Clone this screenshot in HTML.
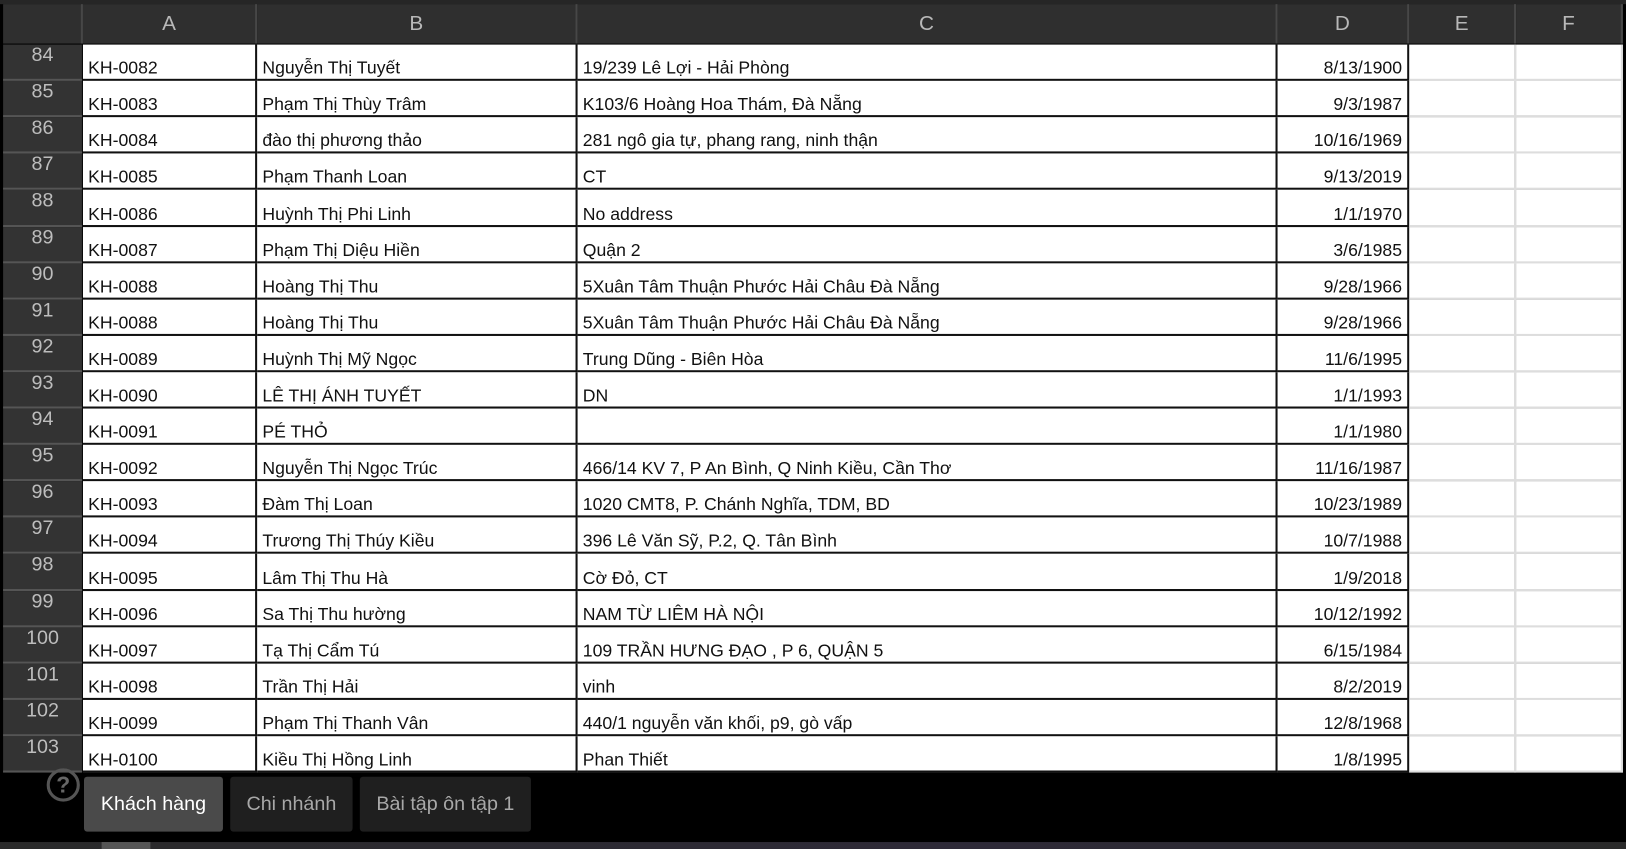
<!DOCTYPE html>
<html><head><meta charset="utf-8"><style>
html,body{margin:0;padding:0;background:#000;width:1626px;height:849px;overflow:hidden}
#w{position:absolute;left:0;top:0;width:1568px;height:819px;transform:scale(1.03699);transform-origin:0 0;background:#000;font-family:"Liberation Sans",sans-serif}
.hd{position:absolute;top:4px;height:38px;background:#2f2f2f;border-right:2px solid #474747;color:#b8b8b8;font-size:20px;text-align:center;line-height:38px;box-sizing:border-box}
.rh{position:absolute;left:3px;width:76px;background:#333;color:#bdbdbd;font-size:19px;text-align:center;border-bottom:2px solid #555;box-sizing:border-box;line-height:22px}
.c{position:absolute;background:#fff;box-sizing:border-box;font-size:17px;color:#111;white-space:nowrap;overflow:hidden;padding:0 5px;display:flex;align-items:flex-end;padding-bottom:0px}
.r{justify-content:flex-end;padding-right:5px}
.tab{position:absolute;top:749px;height:53px;border-radius:3px;font-size:19px;line-height:53px;text-align:center}
</style></head><body><div id="w">
<div style="position:absolute;left:0;top:0;width:1568px;height:4px;background:#262626"></div>
<div class="hd" style="left:3px;width:77px"></div>
<div class="hd" style="left:80px;width:168px">A</div>
<div class="hd" style="left:248px;width:309px">B</div>
<div class="hd" style="left:557px;width:675px">C</div>
<div class="hd" style="left:1232px;width:127px">D</div>
<div class="hd" style="left:1359px;width:103px">E</div>
<div class="hd" style="left:1462px;width:103px">F</div>
<div id="rows"></div>
<div style="position:absolute;left:45px;top:741px;width:26px;height:26px;border:3px solid #555;border-radius:50%;color:#666;font-size:22px;line-height:26px;text-align:center;font-weight:bold">?</div>
<div class="tab" style="left:81px;width:134px;background:#4a4a4a;color:#fff">Khách hàng</div>
<div class="tab" style="left:222px;width:118px;background:#1f1f1f;color:#a8a8a8">Chi nhánh</div>
<div class="tab" style="left:347px;width:165px;background:#1f1f1f;color:#a8a8a8">Bài tập ôn tập 1</div>
<div style="position:absolute;left:0;top:812px;width:1568px;height:7px;background:linear-gradient(90deg,#2a2a2a,#2e2a38 60%,#2a2a2a)"></div>
<div style="position:absolute;left:98px;top:812px;width:47px;height:7px;background:#555"></div>
</div>
<script>
var d=[["KH-0082","Nguyễn Thị  Tuyết","19/239 Lê Lợi - Hải Phòng","8/13/1900"],
["KH-0083","Phạm Thị Thùy Trâm","K103/6 Hoàng Hoa Thám, Đà Nẵng","9/3/1987"],
["KH-0084","đào thị phương thảo","281 ngô gia tự, phang rang, ninh thận","10/16/1969"],
["KH-0085","Phạm Thanh Loan","CT","9/13/2019"],
["KH-0086","Huỳnh Thị Phi Linh","No address","1/1/1970"],
["KH-0087","Phạm Thị Diệu Hiền","Quận 2","3/6/1985"],
["KH-0088","Hoàng Thị Thu","5Xuân Tâm Thuận Phước Hải Châu Đà Nẵng","9/28/1966"],
["KH-0088","Hoàng Thị Thu","5Xuân Tâm Thuận Phước Hải Châu Đà Nẵng","9/28/1966"],
["KH-0089","Huỳnh Thị Mỹ Ngọc","Trung Dũng - Biên Hòa","11/6/1995"],
["KH-0090","LÊ THỊ ÁNH TUYẾT","DN","1/1/1993"],
["KH-0091","PÉ THỎ","","1/1/1980"],
["KH-0092","Nguyễn Thị Ngọc Trúc","466/14 KV 7, P An Bình, Q Ninh Kiều, Cần Thơ","11/16/1987"],
["KH-0093","Đàm Thị Loan","1020 CMT8, P. Chánh Nghĩa, TDM, BD","10/23/1989"],
["KH-0094","Trương Thị Thúy Kiều","396 Lê Văn Sỹ, P.2, Q. Tân Bình","10/7/1988"],
["KH-0095","Lâm Thị Thu Hà","Cờ Đỏ, CT","1/9/2018"],
["KH-0096","Sa Thị Thu hường","NAM TỪ LIÊM HÀ NỘI","10/12/1992"],
["KH-0097","Tạ Thị Cẩm Tú","109 TRẦN HƯNG ĐẠO , P 6, QUẬN 5","6/15/1984"],
["KH-0098","Trần Thị Hải","vinh","8/2/2019"],
["KH-0099","Phạm Thị Thanh Vân","440/1 nguyễn văn khối, p9, gò vấp","12/8/1968"],
["KH-0100","Kiều Thị Hồng Linh","Phan Thiết","1/8/1995"]];
var cols=[[80,168],[248,309],[557,675],[1232,127],[1359,103],[1462,103]];
var h="";
for(var i=0;i<20;i++){var t=Math.round(43+i*35.1),hh=Math.round(43+(i+1)*35.1)-t;
h+='<div class="rh" style="top:'+t+'px;height:'+hh+'px">'+(84+i)+'</div>';
for(var j=0;j<6;j++){var b=j<4?'border-right:2px solid #111;border-bottom:2px solid #111;':'border-right:2px solid #ddd;border-bottom:2px solid #ddd;';
h+='<div class="c'+(j==3?' r':'')+'" style="left:'+cols[j][0]+'px;top:'+t+'px;width:'+cols[j][1]+'px;height:'+hh+'px;'+b+'">'+(j<4?d[i][j]:'')+'</div>';}}
document.getElementById('rows').innerHTML=h;
</script>
</body></html>
